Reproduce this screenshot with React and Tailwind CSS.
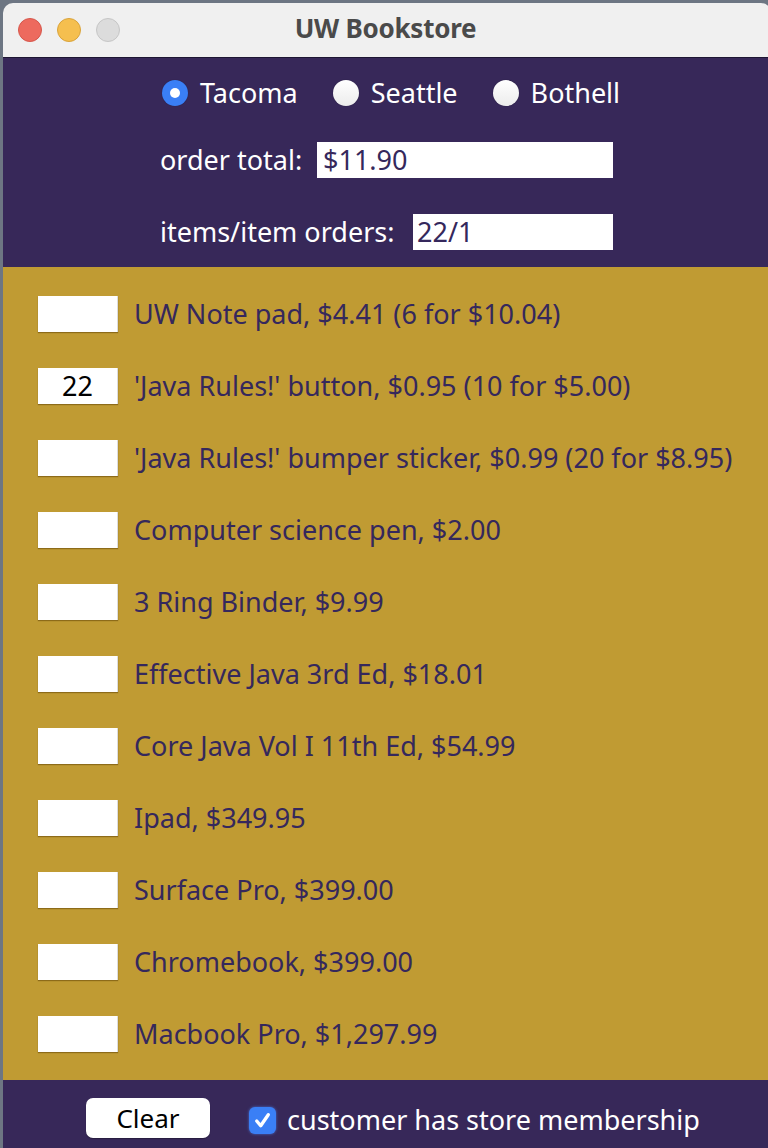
import React from "react";

const items = [
  { qty: "", label: "UW Note pad, $4.41 (6 for $10.04)" },
  { qty: "22", label: "'Java Rules!' button, $0.95 (10 for $5.00)" },
  { qty: "", label: "'Java Rules!' bumper sticker, $0.99 (20 for $8.95)" },
  { qty: "", label: "Computer science pen, $2.00" },
  { qty: "", label: "3 Ring Binder, $9.99" },
  { qty: "", label: "Effective Java 3rd Ed, $18.01" },
  { qty: "", label: "Core Java Vol I 11th Ed, $54.99" },
  { qty: "", label: "Ipad, $349.95" },
  { qty: "", label: "Surface Pro, $399.00" },
  { qty: "", label: "Chromebook, $399.00" },
  { qty: "", label: "Macbook Pro, $1,297.99" },
];

const campuses = [
  { name: "Tacoma", checked: true },
  { name: "Seattle", checked: false },
  { name: "Bothell", checked: false },
];

function Radio({ checked }) {
  if (checked) {
    return (
      <span className="w-[26px] h-[26px] rounded-full bg-[#3a7ff6] flex items-center justify-center shadow-[0_0_1px_rgba(0,0,0,0.4)]">
        <span className="w-[10px] h-[10px] rounded-full bg-white" />
      </span>
    );
  }
  return <span className="w-[26px] h-[26px] rounded-full bg-gradient-to-b from-white to-[#ececec] shadow-[0_0_1px_rgba(0,0,0,0.5)]" />;
}

export default function App() {
  return (
    <div className="w-[768px] h-[1148px] overflow-hidden bg-[#6d7683] pl-[3px] pt-[3px]" style={{ fontFamily: '"Noto Sans", "DejaVu Sans", sans-serif' }}>
      <div className="w-[768px] h-[1145px] rounded-t-[10px] overflow-hidden flex flex-col">
        {/* title bar */}
        <div className="h-[55px] shrink-0 bg-[#f0f0f0] border-b border-[#1e1633] relative flex items-center justify-center">
          <div className="absolute left-[15px] top-[15px] flex gap-[15px]">
            <span className="w-[24px] h-[24px] rounded-full bg-[#ed6a5e] border border-[#d6574c]" />
            <span className="w-[24px] h-[24px] rounded-full bg-[#f5bf4f] border border-[#d9a33b]" />
            <span className="w-[24px] h-[24px] rounded-full bg-[#dcdcdc] border border-[#c6c6c6]" />
          </div>
          <span className="text-[26px] font-bold text-[#4a4a4a] tracking-[-0.01em] mr-[3px] -mt-[3px]">UW Bookstore</span>
        </div>

        {/* header */}
        <div className="h-[209px] shrink-0 bg-[#372859] text-white text-[27px] pl-[159px] pt-[20px]">
          <div className="flex items-center h-[30px]">
            {campuses.map((c) => (
              <label key={c.name} className="flex items-center gap-[12px] mr-[35px]">
                <Radio checked={c.checked} />
                <span>{c.name}</span>
              </label>
            ))}
          </div>
          <div className="flex items-center mt-[34px] h-[36px]">
            <span className="w-[157px] -ml-[2px]">order total:</span>
            <div className="w-[296px] h-[36px] bg-white text-[#35285c] px-[6px] flex items-center">$11.90</div>
          </div>
          <div className="flex items-center mt-[36px] h-[36px]">
            <span className="w-[253px] -ml-[2px]">items/item orders:</span>
            <div className="w-[200px] h-[36px] bg-white text-[#35285c] px-[4px] flex items-center">22/1</div>
          </div>
        </div>

        {/* items */}
        <div className="h-[813px] shrink-0 bg-[#c09b33] pl-[35px] pt-[29px] flex flex-col gap-[36px]">
          {items.map((it) => (
            <div key={it.label} className="flex items-center h-[36px]">
              <div className="w-[80px] h-[36px] bg-white border-r border-[#dcdcdc] shadow-[0_1px_1px_rgba(90,60,0,0.5)] flex items-center justify-center text-[27px] text-black">
                {it.qty}
              </div>
              <span className="ml-[16px] text-[27px] text-[#35285c] whitespace-nowrap">{it.label}</span>
            </div>
          ))}
        </div>

        {/* footer */}
        <div className="flex-1 bg-[#372859] flex items-start pt-[18px] pl-[83px]">
          <button className="w-[124px] h-[40px] rounded-[7px] bg-white text-black text-[26px] flex items-center justify-center shadow-[0_1px_1px_rgba(0,0,0,0.3)]">
            Clear
          </button>
          <label className="flex items-center ml-[39px] mt-[2px] h-[40px] gap-[11px] text-white text-[27px]">
            <span className="w-[27px] h-[27px] rounded-[6px] bg-[#3a7ff6] flex items-center justify-center shadow-[0_0_3px_rgba(80,140,255,0.7)]">
              <svg viewBox="0 0 20 20" className="w-[21px] h-[21px]">
                <path d="M4.5 10.5 L8.3 15 L15.5 4.5" fill="none" stroke="white" strokeWidth="3.2" strokeLinecap="round" strokeLinejoin="round" />
              </svg>
            </span>
            <span>customer has store membership</span>
          </label>
        </div>
      </div>
    </div>
  );
}
